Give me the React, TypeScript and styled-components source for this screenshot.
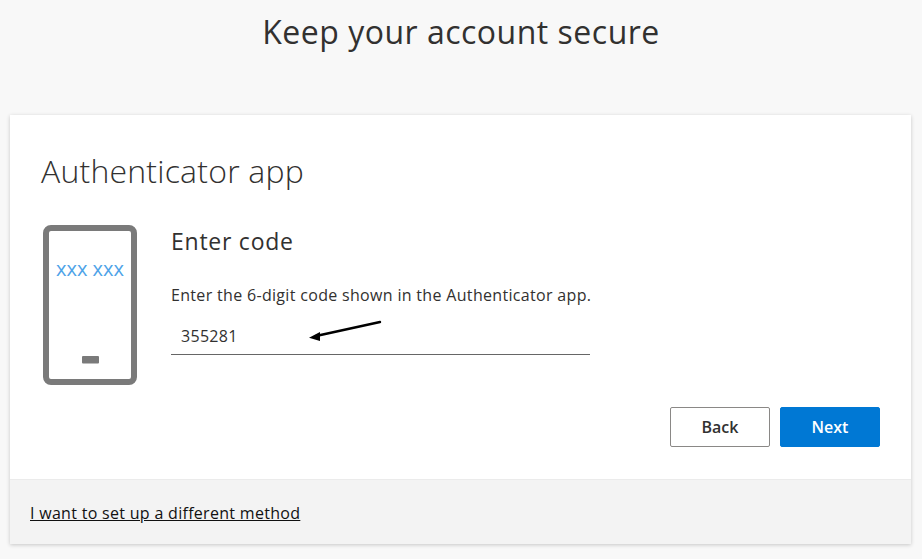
import React from "react";
import styled, { createGlobalStyle } from "styled-components";

const Global = createGlobalStyle`
  html, body { margin: 0; padding: 0; background: #f8f8f8; }
  * { box-sizing: border-box; }
`;
const Page = styled.div`
  width: 922px; height: 559px; overflow: hidden; background: #f8f8f8;
  font-family: "Open Sans", "Noto Sans", sans-serif; color: #323130;
  padding: 0 10px;
`;
const Title = styled.h1`
  margin: 0; height: 115px; padding-top: 10px; text-align: center;
  font-size: 32px; font-weight: 400; line-height: 44px; color: #323130; letter-spacing: .5px;
`;
const Card = styled.section`
  width: 901px; height: 429px; background: #fff; display: flex; flex-direction: column;
  box-shadow: 0 1px 4px rgba(0,0,0,.2);
`;
const Body = styled.div`
  flex: 1; padding: 33px 31px 0 31px; display: flex; flex-direction: column;
`;
const Heading = styled.h2`
  margin: 0 0 30px; font-size: 32px; font-weight: 300; line-height: 46px; color: #323130; letter-spacing: .2px;
`;
const Row = styled.div`display: flex; gap: 34px; align-items: flex-start;`;
const Phone = styled.svg`width: 94px; height: 160px; margin: 1px 0 0 2px; flex: none;`;
const Form = styled.div`width: 419px; display: flex; flex-direction: column;`;
const SubHead = styled.h3`margin: 1px 0 27px; font-size: 23px; font-weight: 400; line-height: 32px; letter-spacing: .75px;`;
const Hint = styled.p`margin: 0 0 10px; font-size: 16px; line-height: 22px; letter-spacing: .32px; white-space: nowrap;`;
const Field = styled.div`position: relative; height: 39px; border-bottom: 1px solid #666;`;
const Input = styled.div`padding: 9px 0 0 10px; font-size: 16px; line-height: 22px; letter-spacing: .3px;`;
const Arrow = styled.svg`position: absolute; left: 135px; top: 0; width: 80px; height: 30px;`;
const Actions = styled.div`display: flex; justify-content: flex-end; gap: 10px; margin-top: 22px;`;
const Button = styled.button<{ $primary?: boolean }>`
  width: 100px; height: 40px; font: 600 16px "Open Sans", sans-serif; border-radius: 2px; padding: 0;
  background: ${p => p.$primary ? "#0078d4" : "#fff"}; color: ${p => p.$primary ? "#fff" : "#323130"};
  border: 1px solid ${p => p.$primary ? "#0078d4" : "#8a8886"};
`;
const Footer = styled.div`
  height: 65px; background: #f3f3f3; border-top: 1px solid #ebebeb; display: flex; align-items: center; padding: 2px 0 0 20px;
`;
const Link = styled.a`font-size: 16px; color: #111; text-decoration: underline; letter-spacing: .3px;`;

export default function App() {
  return (
    <Page>
      <Global />
      <Title>Keep your account secure</Title>
      <Card>
        <Body>
          <Heading>Authenticator app</Heading>
          <Row>
            <Phone viewBox="0 0 94 160">
              <rect x="3" y="3" width="88" height="154" rx="5" fill="#fff" stroke="#7a7a7a" strokeWidth="6" />
              <rect x="39" y="131" width="17" height="7.5" rx="1" fill="#7a7a7a" />
              <text x="47" y="51" textAnchor="middle" fontFamily="Open Sans" fontSize="20" fontWeight="400" fill="#4ea3e8">xxx xxx</text>
            </Phone>
            <Form>
              <SubHead>Enter code</SubHead>
              <Hint>Enter the 6-digit code shown in the Authenticator app.</Hint>
              <Field>
                <Input>355281</Input>
                <Arrow viewBox="0 0 80 30">
                  <path d="M74 6 L10 20" stroke="#000" strokeWidth="2.4" fill="none" strokeLinecap="round" />
                  <path d="M3 21.7 L14 16 L14 25 Z" fill="#000" />
                </Arrow>
              </Field>
            </Form>
          </Row>
          <Actions>
            <Button>Back</Button>
            <Button $primary>Next</Button>
          </Actions>
        </Body>
        <Footer><Link>I want to set up a different method</Link></Footer>
      </Card>
    </Page>
  );
}
